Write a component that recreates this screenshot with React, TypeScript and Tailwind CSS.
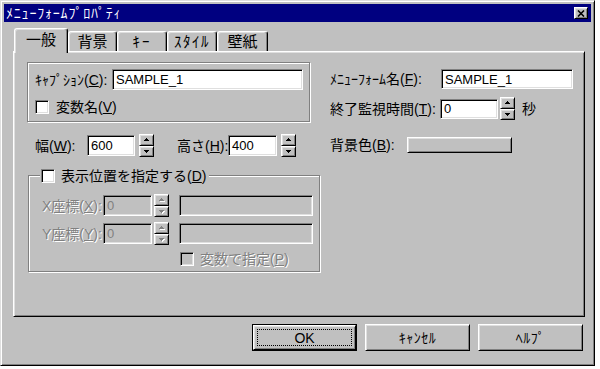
import React from "react";

// Win95 bevels
const raised =
  "border border-t-white border-l-white border-r-black border-b-black shadow-[inset_1px_1px_0_#dfdfdf,inset_-1px_-1px_0_#808080]";
const sunken =
  "border border-t-[#808080] border-l-[#808080] border-r-white border-b-white shadow-[inset_1px_1px_0_#000,inset_-1px_-1px_0_#dfdfdf]";
const etched = "border border-[#808080] shadow-[1px_1px_0_#fff,inset_1px_1px_0_#fff]";
const dim = "text-[#808080] [text-shadow:1px_1px_0_#fff]";

function clsx(...a: Array<string | false | null | undefined>) {
  return a.filter(Boolean).join(" ");
}

function Lbl({
  text,
  k,
  colon = true,
  off,
  className,
}: {
  text: string;
  k: string;
  colon?: boolean;
  off?: boolean;
  className?: string;
}) {
  return (
    <span className={clsx("whitespace-nowrap text-[14px] leading-none", off && dim, className)}>
      {text}(<u className="underline-offset-1">{k}</u>){colon ? ":" : ""}
    </span>
  );
}

function Field({
  w,
  h = "h-[21px]",
  value = "",
  off,
  className,
}: {
  w: string;
  h?: string;
  value?: string;
  off?: boolean;
  className?: string;
}) {
  return (
    <div
      className={clsx(
        sunken,
        w,
        h,
        "flex shrink-0 items-center pl-[3px] text-[13px] leading-none",
        off ? "bg-[#c0c0c0] text-[#808080]" : "bg-white text-black",
        className
      )}
    >
      {value}
    </div>
  );
}

function Arrow({ up, off }: { up?: boolean; off?: boolean }) {
  return (
    <svg width="6" height="4" viewBox="0 0 6 4" className="block">
      {off && (
        <path
          d={up ? "M2 0h1v1h1v1h1v1h-5v-1h1v-1h1z" : "M0 0h5v1h-1v1h-1v1h-1v-1h-1v-1h-1z"}
          fill="#fff"
          transform="translate(1 1)"
        />
      )}
      <path
        d={up ? "M2 0h1v1h1v1h1v1h-5v-1h1v-1h1z" : "M0 0h5v1h-1v1h-1v1h-1v-1h-1v-1h-1z"}
        fill={off ? "#808080" : "#000"}
      />
    </svg>
  );
}

function Spinner({ off, className }: { off?: boolean; className?: string }) {
  return (
    <div className={clsx("flex h-[23px] w-[15px] shrink-0 flex-col", className)}>
      <div className={clsx(raised, "flex h-[12px] items-center justify-center bg-[#c0c0c0] pl-px")}>
        <Arrow up off={off} />
      </div>
      <div className={clsx(raised, "flex h-[11px] items-center justify-center bg-[#c0c0c0] pl-px")}>
        <Arrow off={off} />
      </div>
    </div>
  );
}

function Check({ off }: { off?: boolean }) {
  return <div className={clsx(sunken, "h-[14px] w-[14px] shrink-0", off ? "bg-[#c0c0c0]" : "bg-white")} />;
}

function Tab({
  label,
  w,
  active,
  className,
}: {
  label: string;
  w: string;
  active?: boolean;
  className?: string;
}) {
  return (
    <div
      className={clsx(
        "flex items-center justify-center rounded-t-[3px] border-l border-t border-r border-l-white border-t-white border-r-black bg-[#c0c0c0] text-[15px] leading-none shadow-[inset_-1px_0_0_#808080,inset_1px_1px_0_#dfdfdf]",
        w,
        active ? "relative z-10 -mb-[2px] h-[25px] pb-[3px]" : "h-[20px]",
        className
      )}
    >
      {label}
    </div>
  );
}

function Btn({ label, def, className }: { label: string; def?: boolean; className?: string }) {
  return (
    <div className={clsx("h-[27px] w-[105px]", def && "border border-black")}>
      <div
        className={clsx(
          raised,
          "flex h-full w-full items-center justify-center bg-[#c0c0c0] text-[14px] leading-none",
          className
        )}
      >
        {def ? (
          <div className="flex h-[calc(100%-6px)] w-[calc(100%-6px)] items-center justify-center border border-dotted border-black">
            {label}
          </div>
        ) : (
          label
        )}
      </div>
    </div>
  );
}

export default function App() {
  return (
    <div className="h-[369px] w-[600px] overflow-hidden bg-white font-['Liberation_Sans','Noto_Sans_CJK_JP',sans-serif] text-black">
      <div className="h-[366px] w-[595px] border border-t-[#dfdfdf] border-l-[#dfdfdf] border-r-black border-b-black bg-[#c0c0c0] p-[3px] shadow-[inset_1px_1px_0_#fff,inset_-1px_-1px_0_#808080]">
        {/* Title bar */}
        <div className="flex h-[18px] items-center justify-between bg-[#000080] pl-[2px] pr-[3px]">
          <span className="text-[14px] leading-none tracking-[0.8px] text-white">ﾒﾆｭｰﾌｫｰﾑﾌﾟﾛﾊﾟﾃｨ</span>
          <div className={clsx(raised, "flex h-[12px] w-[14px] items-center justify-center bg-[#c0c0c0]")}>
            <svg width="8" height="7" viewBox="0 0 8 7">
              <path d="M1 0.5l6 6M7 0.5l-6 6" stroke="#000" strokeWidth="1.6" />
            </svg>
          </div>
        </div>

        <div className="ml-[9px] w-[572px]">
          {/* Tabs */}
          <div className="mt-[6px] flex h-[23px] items-end pl-[1px]">
            <Tab label="一般" w="w-[54px]" active />
            <Tab label="背景" w="w-[49px]" />
            <Tab label="ｷｰ" w="w-[50px]" className="tracking-[2px]" />
            <Tab label="ｽﾀｲﾙ" w="w-[50px]" className="tracking-[1.5px]" />
            <Tab label="壁紙" w="w-[51px]" />
          </div>

          {/* Panel */}
          <div className={clsx(raised, "flex h-[266px] w-[572px] bg-[#c0c0c0] pl-[13px] pt-[10px]")}>
            {/* Left column */}
            <div className="w-[293px]">
              <div className={clsx(etched, "h-[60px] w-[283px] pl-[7px] pt-[6px]")}>
                <div className="flex h-[21px] items-center">
                  <Lbl text="ｷｬﾌﾟｼｮﾝ" k="C" className="w-[77px]" />
                  <Field w="w-[191px]" value="SAMPLE_1" />
                </div>
                <div className="mt-[10px] flex h-[14px] items-center">
                  <Check />
                  <Lbl text="変数名" k="V" colon={false} className="ml-[7px]" />
                </div>
              </div>

              <div className="mt-[12px] flex h-[23px] items-center pl-[8px]">
                <Lbl text="幅" k="W" className="w-[52px]" />
                <Field w="w-[48px]" value="600" />
                <Spinner className="ml-[4px]" />
                <Lbl text="高さ" k="H" className="ml-[23px] w-[51px]" />
                <Field w="w-[49px]" value="400" />
                <Spinner className="ml-[4px]" />
              </div>

              <div className={clsx(etched, "ml-[1px] mt-[18px] h-[97px] w-[292px]")}>
                <div className="-mt-[8px] ml-[11px] flex h-[15px] w-fit items-center bg-[#c0c0c0] pl-[1px] pr-[3px]">
                  <Check />
                  <Lbl text="表示位置を指定する" k="D" colon={false} className="ml-[6px]" />
                </div>
                <div className="ml-[13px] mt-[12px] flex h-[21px] items-center">
                  <Lbl text="X座標" k="X" off className="w-[61px]" />
                  <Field w="w-[49px]" value="0" off />
                  <Spinner off className="ml-[2px]" />
                  <Field w="w-[134px]" off className="ml-[10px]" />
                </div>
                <div className="ml-[13px] mt-[7px] flex h-[21px] items-center">
                  <Lbl text="Y座標" k="Y" off className="w-[61px]" />
                  <Field w="w-[49px]" value="0" off />
                  <Spinner off className="ml-[2px]" />
                  <Field w="w-[134px]" off className="ml-[10px]" />
                </div>
                <div className="ml-[151px] mt-[8px] flex h-[14px] items-center">
                  <Check off />
                  <Lbl text="変数で指定" k="P" colon={false} off className="ml-[6px]" />
                </div>
              </div>
            </div>

            {/* Right column */}
            <div className="ml-[10px] w-[245px]">
              <div className="mt-[7px] flex h-[20px] items-center">
                <Lbl text="ﾒﾆｭｰﾌｫｰﾑ名" k="F" className="w-[111px]" />
                <Field w="w-[132px]" h="h-[20px]" value="SAMPLE_1" />
              </div>
              <div className="mt-[8px] flex h-[23px] items-center">
                <Lbl text="終了監視時間" k="T" className="w-[110px]" />
                <Field w="w-[58px]" h="h-[20px]" value="0" />
                <Spinner className="ml-[2px]" />
                <span className="ml-[7px] text-[14px] leading-none">秒</span>
              </div>
              <div className="mt-[17px] flex h-[16px] items-center">
                <Lbl text="背景色" k="B" className="w-[77px]" />
                <div className={clsx(raised, "h-[16px] w-[105px] bg-[#c0c0c0]")} />
              </div>
            </div>
          </div>

          {/* Buttons */}
          <div className="mt-[7px] flex gap-[8px] pl-[239px]">
            <Btn label="OK" def />
            <Btn label="ｷｬﾝｾﾙ" className="tracking-[0.5px]" />
            <Btn label="ﾍﾙﾌﾟ" className="tracking-[0.5px]" />
          </div>
        </div>
      </div>
    </div>
  );
}
